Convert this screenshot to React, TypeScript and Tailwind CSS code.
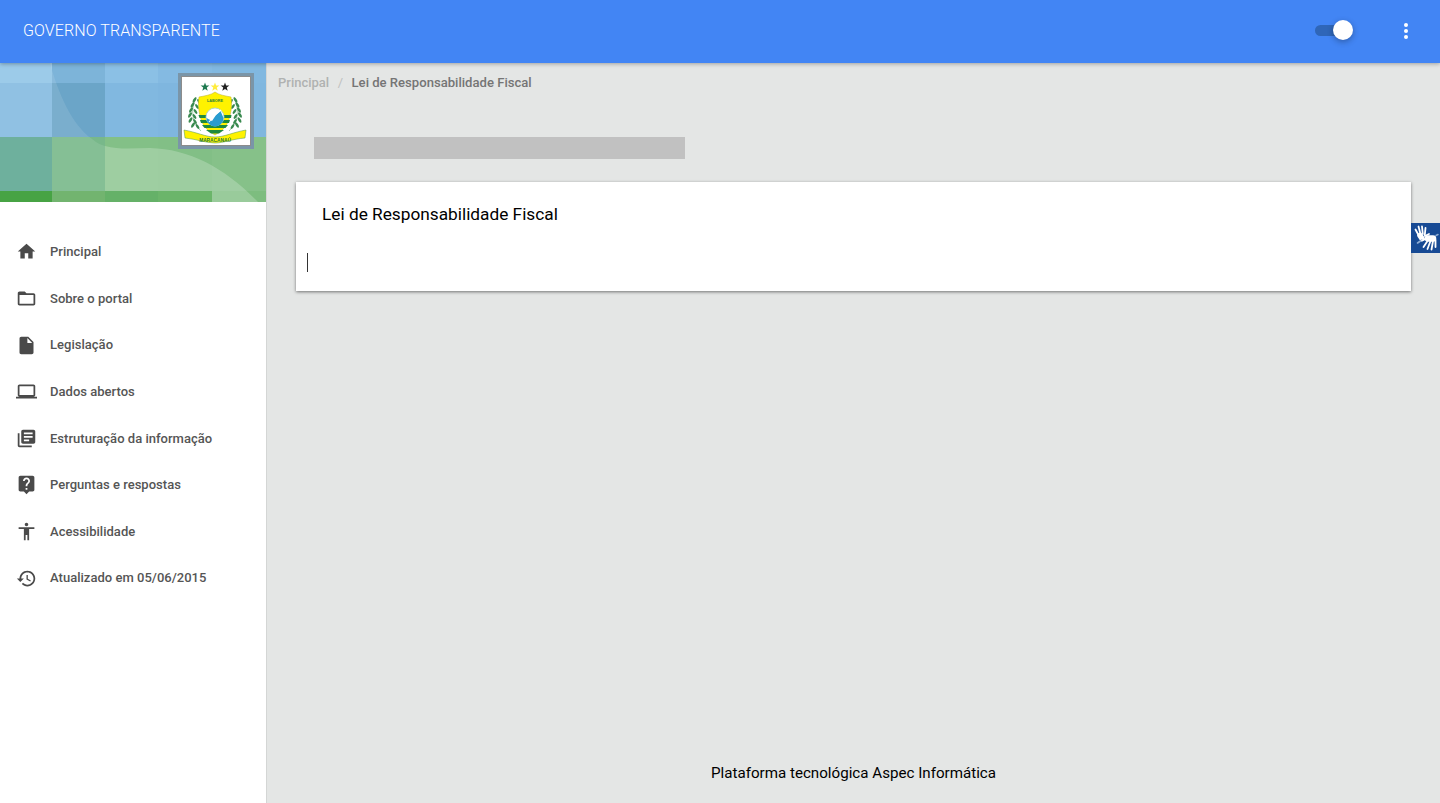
const nav: { label: string; d: string }[] = [
  { label: "Principal", d: "M10 20v-6h4v6h5v-8h3L12 3 2 12h3v8z" },
  { label: "Sobre o portal", d: "M20 6h-8l-2-2H4c-1.1 0-1.99.9-1.99 2L2 18c0 1.1.9 2 2 2h16c1.1 0 2-.9 2-2V8c0-1.1-.9-2-2-2zm0 12H4V8h16v10z" },
  { label: "Legislação", d: "M6 2c-1.1 0-1.99.9-1.99 2L4 20c0 1.1.89 2 1.99 2H18c1.1 0 2-.9 2-2V8l-6-6H6zm7 7V3.5L18.5 9H13z" },
  { label: "Dados abertos", d: "M20 18c1.1 0 1.99-.9 1.99-2L22 6c0-1.1-.9-2-2-2H4c-1.1 0-2 .9-2 2v10c0 1.1.9 2 2 2H0v2h24v-2h-4zM4 6h16v10H4V6z" },
  { label: "Estruturação da informação", d: "M4 6H2v14c0 1.1.9 2 2 2h14v-2H4V6zm16-4H8c-1.1 0-2 .9-2 2v12c0 1.1.9 2 2 2h12c1.1 0 2-.9 2-2V4c0-1.1-.9-2-2-2zm-1 9H9V9h10v2zm-4 4H9v-2h6v2zm4-8H9V5h10v2z" },
  { label: "Perguntas e respostas", d: "M19 2H5c-1.11 0-2 .9-2 2v14c0 1.1.89 2 2 2h4l3 3 3-3h4c1.1 0 2-.9 2-2V4c0-1.1-.9-2-2-2zm-6 16h-2v-2h2v2zm2.07-7.75l-.9.92C13.45 11.9 13 12.5 13 14h-2v-.5c0-1.1.45-2.1 1.17-2.83l1.24-1.26c.37-.36.59-.86.59-1.41 0-1.1-.9-2-2-2s-2 .9-2 2H8c0-2.21 1.79-4 4-4s4 1.79 4 4c0 .88-.36 1.68-.93 2.25z" },
  { label: "Acessibilidade", d: "M12 2c1.1 0 2 .9 2 2s-.9 2-2 2-2-.9-2-2 .9-2 2-2zm9 7h-6v13h-2v-6h-2v6H9V9H3V7h18v2z" },
  { label: "Atualizado em 05/06/2015", d: "M13 3c-4.97 0-9 4.03-9 9H1l3.89 3.89.07.14L9 12H6c0-3.87 3.13-7 7-7s7 3.13 7 7-3.13 7-7 7c-1.93 0-3.68-.79-4.94-2.06l-1.42 1.42C8.27 19.99 10.51 21 13 21c4.97 0 9-4.03 9-9s-4.03-9-9-9zm-1 5v5l4.28 2.54.72-1.21-3.5-2.08V8H12z" },
];

const xs = [0, 52, 105, 158, 212, 266];
const ys = [0, 20, 74, 128, 139];
const tiles = [
  ["#9ccbe9", "#7db4d9", "#8bc0e5", "#84bae2", "#81b8e0"],
  ["#90c1e3", "#6ba5c8", "#81b8e0", "#7fb6df", "#80b7df"],
  ["#6eb09d", "#78b88a", "#83c087", "#82bf86", "#86c189"],
  ["#47a344", "#72b46f", "#65b168", "#6bb56a", "#7dbd7f"],
];

function Banner() {
  return (
    <svg viewBox="0 0 266 139" width="266" height="139" className="block">
      {tiles.map((row, r) =>
        row.map((c, i) => (
          <rect key={`${r}-${i}`} x={xs[i]} y={ys[r]} width={xs[i + 1] - xs[i]} height={ys[r + 1] - ys[r]} fill={c} />
        ))
      )}
      <path d="M50 0C58 30 72 62 92 76C97 80 101 82 105 83V128H52V0Z" fill="#ffffff" fillOpacity="0.1" />
      <path d="M105 83C120 87 135 85 150 85C190 86 225 105 258 139H212V128H105Z" fill="#ffffff" fillOpacity="0.22" />
    </svg>
  );
}

function Star({ cx, cy, fill }: { cx: number; cy: number; fill: string }) {
  const pts: string[] = [];
  for (let i = 0; i < 10; i++) {
    const r = i % 2 === 0 ? 4.6 : 1.9;
    const a = (Math.PI / 5) * i - Math.PI / 2;
    pts.push(`${cx + r * Math.cos(a)},${cy + r * Math.sin(a)}`);
  }
  return <polygon points={pts.join(" ")} fill={fill} />;
}

function Crest() {
  const leaves = [[12.5, 23], [10.5, 28], [9, 33], [8, 38], [8.5, 43], [11, 48]];
  return (
    <svg viewBox="0 0 68 68" width="68" height="68" className="block bg-white">
      <Star cx={23} cy={10} fill="#1f7a50" />
      <Star cx={33} cy={10} fill="#ffec3d" />
      <Star cx={43} cy={10} fill="#222222" />
      <path d="M14 20C9 32 9 44 19 54M52 20C57 32 57 44 47 54" stroke="#7fb58c" strokeWidth="0.7" fill="none" />
      {leaves.map(([x, y], i) => (
        <g key={i} fill="#3a8a50">
          <ellipse cx={x} cy={y} rx="3" ry="1.3" transform={`rotate(-55 ${x} ${y})`} />
          <ellipse cx={x + 4.5} cy={y + 1.5} rx="2.800" ry="1.200" transform={`rotate(-125 ${x + 4.5} ${y + 1.5})`} />
          <ellipse cx={66 - x} cy={y} rx="3" ry="1.3" transform={`rotate(55 ${66 - x} ${y})`} />
          <ellipse cx={61.5 - x} cy={y + 1.5} rx="2.800" ry="1.200" transform={`rotate(125 ${61.5 - x} ${y + 1.5})`} />
        </g>
      ))}
      <path d="M17 20C22 19 29 18 33 15C37 18 44 19 49 20C50.500 28 49 36 46.500 44C43 52 38 55 33 58C28 55 23 52 19.500 44C17 36 15.500 28 17 20Z" fill="#fff200" stroke="#b9ae30" strokeWidth="0.5" />
      <text x="33" y="25" textAnchor="middle" fontSize="3.800" fontWeight="700" fill="#2b7d3e" style={{ fontFamily: '"Liberation Sans", sans-serif' }}>LABORE</text>
      <path d="M16.500 38H49.500L49 41H17.500Z" fill="#1f8a3f" />
      <path d="M18 43H48L47 46H19Z" fill="#1f8a3f" />
      <path d="M20 48H46L43.500 51H22.500Z" fill="#1f8a3f" />
      <path d="M24 53H42L37 56.500H29Z" fill="#1f8a3f" />
      <circle cx="33" cy="40" r="9" fill="#ffffff" stroke="#9fcbe0" strokeWidth="0.8" />
      <path d="M24.500 41A8.500 8.500 0 0 0 41.500 41L38.500 34L34 38L30 44Z" fill="#2a9cd0" />
      <path d="M27 45L33 38L39 33" stroke="#ffffff" strokeWidth="1.100" fill="none" />
      <path d="M2 53C14 55 24 60 33 60C42 60 52 55 64 53L63 61C50 62 42 66 33 66C24 66 14 62 3 61Z" fill="#fff200" stroke="#4a9650" strokeWidth="0.5" />
      <text x="33" y="64.500" textAnchor="middle" fontSize="4.800" fontWeight="700" fill="#1f7a3e" style={{ fontFamily: '"Liberation Sans", sans-serif' }}>MARACANAÚ</text>
    </svg>
  );
}

function HandTalk() {
  return (
    <svg viewBox="0 0 29 30" width="29" height="30" className="block">
      <g stroke="#ffffff" strokeLinecap="round" fill="none">
        <path d="M4.500 6.500L7.500 12" strokeWidth="1.800" />
        <path d="M7.500 3.500L9.500 11" strokeWidth="1.800" />
        <path d="M11 3.500L11.800 11" strokeWidth="1.800" />
        <path d="M14.500 5L13.800 12" strokeWidth="1.800" />
        <path d="M9 12.500L11 15.500" strokeWidth="5.500" />
        <path d="M14 13L18 11" strokeWidth="1.800" />
        <path d="M6.500 20L11 17" strokeWidth="1.600" stroke="#8fadd4" />
      </g>
      <g stroke="#ffffff" strokeLinecap="round" fill="none">
        <path d="M17 15.500L22 15.500" strokeWidth="6.500" />
        <path d="M11 17.500L17 15" strokeWidth="1.800" />
        <path d="M12.500 24L16.500 18" strokeWidth="1.800" />
        <path d="M16.500 26L19.500 18" strokeWidth="1.800" />
        <path d="M20.500 26.500L22 18" strokeWidth="1.800" />
        <path d="M24.500 24L24.500 17" strokeWidth="1.800" />
        <path d="M25 12.500L27 11.500" strokeWidth="1.500" stroke="#8fadd4" />
      </g>
    </svg>
  );
}

export default function App() {
  return (
    <div className="flex h-[803px] flex-col overflow-hidden bg-[#e4e6e5] font-['Roboto',sans-serif]">
      <header className="relative z-10 flex h-[63px] shrink-0 items-center bg-[#4285f4] pb-[2px] pl-[23px] pr-[24px] shadow-[0_1px_4px_rgba(0,0,0,0.3)]">
        <h1 className="flex-1 text-[16px] font-light tracking-[0.1px] text-white">GOVERNO TRANSPARENTE</h1>
        <div className="relative mr-[51px] h-[11px] w-[28px] rounded-full bg-[#2f66b8]">
          <div className="absolute -right-[10px] -top-[5px] h-[20px] w-[20px] rounded-full bg-white shadow-[0_2px_6px_rgba(0,0,0,0.3)]" />
        </div>
        <svg viewBox="0 0 24 24" width="24" height="24" fill="#ffffff" className="mr-[-2px]">
          <circle cx="12" cy="6" r="2" />
          <circle cx="12" cy="12" r="2" />
          <circle cx="12" cy="18" r="2" />
        </svg>
      </header>

      <div className="flex min-h-0 flex-1">
        <aside className="w-[267px] shrink-0 border-r border-[#d4d6d5] bg-white">
          <div className="relative h-[139px]">
            <Banner />
            <div className="absolute left-[178px] top-[10px] border-[3px] border-[#7a95a8] bg-[#8c8c8c] p-px">
              <Crest />
            </div>
          </div>
          <nav className="flex flex-col pt-[26.600px]">
            {nav.map((n) => (
              <a key={n.label} className="flex h-[46.600px] items-center pl-[16px]">
                <svg viewBox="0 0 24 24" width="21" height="21" fill="#4a4a4a" className="shrink-0">
                  <path d={n.d} />
                </svg>
                <span className="ml-[13px] text-[13px] font-medium tracking-[0.02px] text-[#555555]">{n.label}</span>
              </a>
            ))}
          </nav>
        </aside>

        <main className="relative flex min-w-0 flex-1 flex-col">
          <div className="flex h-[39px] items-center pl-[11px] text-[13px] font-medium">
            <span className="text-[#b0b2b1]">Principal</span>
            <span className="mx-[8.500px] font-normal text-[#bfc1c0]">/</span>
            <span className="text-[13.100px] text-[#757575]">Lei de Responsabilidade Fiscal</span>
          </div>
          <div className="ml-[47px] mt-[35px] h-[22px] w-[371px] bg-[#c1c1c1]" />
          <section className="ml-[29px] mr-[29px] mt-[23px] h-[109px] bg-white pl-[11px] shadow-[0_1px_3px_rgba(0,0,0,0.5)]">
            <h2 className="pl-[15px] pt-[21px] text-[17.250px] font-normal leading-[22px] text-black">Lei de Responsabilidade Fiscal</h2>
            <div className="mt-[28px] h-[19px] w-px bg-[#333333]" />
          </section>
          <footer className="mt-auto pb-[18px] text-center text-[15.150px] leading-[24px] text-black">
            Plataforma tecnológica Aspec Informática
          </footer>
          <div className="absolute right-0 top-[160px] bg-[#174a94]">
            <HandTalk />
          </div>
        </main>
      </div>
    </div>
  );
}
